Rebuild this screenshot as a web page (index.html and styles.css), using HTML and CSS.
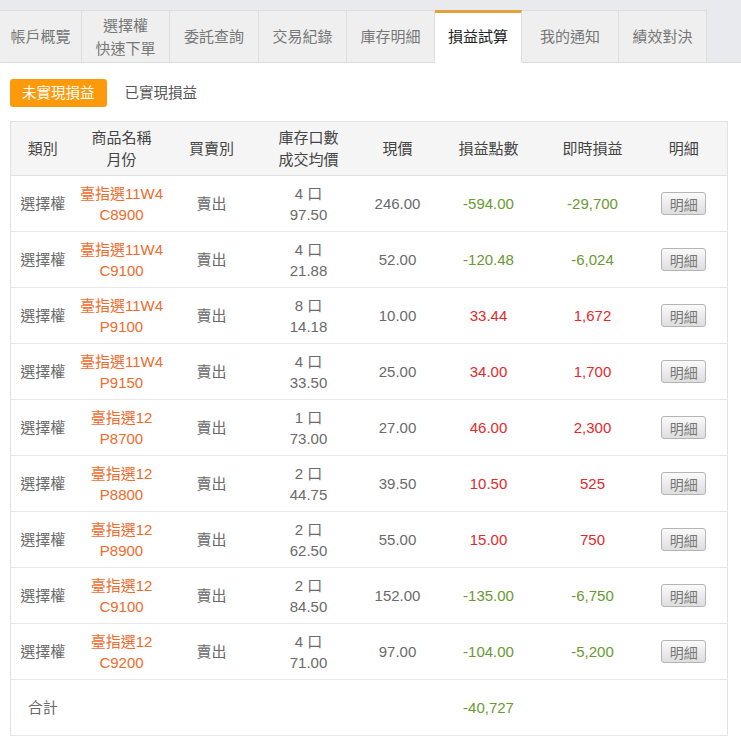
FILE: index.html
```html
<!DOCTYPE html>
<html>
    <head>
        <meta charset="utf-8">
        <title>損益試算</title>
        <link rel="stylesheet" href="styles.css">
    </head>
    <body>
        <div class="tabBar">
            <a class="tab tabFirst">帳戶概覽</a>
            <a class="tab">選擇權<br>快速下單</a>
            <a class="tab tabMid">委託查詢</a>
            <a class="tab">交易紀錄</a>
            <a class="tab">庫存明細</a>
            <a class="tab tabActive">損益試算</a>
            <a class="tab tabWide">我的通知</a>
            <a class="tab">績效對決</a>
        </div>
        <div class="content">
            <div class="switchRow">
                <a class="switchBtn switchOn">未實現損益</a>
                <a class="switchBtn">已實現損益</a>
            </div>
            <table class="plTable">
                <colgroup>
                    <col style="width:64px">
                    <col style="width:94px">
                    <col style="width:86px">
                    <col style="width:108px">
                    <col style="width:70px">
                    <col style="width:112px">
                    <col style="width:96px">
                    <col style="width:87px">
                </colgroup>
                <thead>
                    <tr>
                        <th>類別</th>
                        <th>商品名稱<br>月份</th>
                        <th>買賣別</th>
                        <th>庫存口數<br>成交均價</th>
                        <th>現價</th>
                        <th>損益點數</th>
                        <th>即時損益</th>
                        <th>明細</th>
                    </tr>
                </thead>
                <tbody id="rows"></tbody>
                <tfoot>
                    <tr>
                        <td>合計</td>
                        <td></td><td></td><td></td><td></td>
                        <td class="loss">-40,727</td>
                        <td></td><td></td>
                    </tr>
                </tfoot>
            </table>
        </div>
        <script>
            var positions = [
                ["11W4", "C8900", "4", "97.50", "246.00", "-594.00", "-29,700"],
                ["11W4", "C9100", "4", "21.88", "52.00", "-120.48", "-6,024"],
                ["11W4", "P9100", "8", "14.18", "10.00", "33.44", "1,672"],
                ["11W4", "P9150", "4", "33.50", "25.00", "34.00", "1,700"],
                ["12", "P8700", "1", "73.00", "27.00", "46.00", "2,300"],
                ["12", "P8800", "2", "44.75", "39.50", "10.50", "525"],
                ["12", "P8900", "2", "62.50", "55.00", "15.00", "750"],
                ["12", "C9100", "2", "84.50", "152.00", "-135.00", "-6,750"],
                ["12", "C9200", "4", "71.00", "97.00", "-104.00", "-5,200"]
            ];

            var rowsElement = document.getElementById("rows");

            for (var i = 0; i < positions.length; i++) {
                var p = positions[i];
                var cls = p[5].charAt(0) === "-" ? "loss" : "gain";
                var tr = document.createElement("tr");
                tr.innerHTML =
                    "<td>選擇權</td>" +
                    "<td class=\"product\">臺指選" + p[0] + "<br>" + p[1] + "</td>" +
                    "<td>賣出</td>" +
                    "<td>" + p[2] + " 口<br>" + p[3] + "</td>" +
                    "<td>" + p[4] + "</td>" +
                    "<td class=\"" + cls + "\">" + p[5] + "</td>" +
                    "<td class=\"" + cls + "\">" + p[6] + "</td>" +
                    "<td><button class=\"detailBtn\">明細</button></td>";
                rowsElement.appendChild(tr);
            }
        </script>
    </body>
</html>
```

FILE: styles.css
```css
body{
    margin: 0;
    padding: 0;
    font-family: "Liberation Sans", "Noto Sans CJK TC", sans-serif;
    font-size: 15px;
    color: #6a6a6a;
    background-color: #ffffff;
}

.tabBar{
    display: flex;
    padding-top: 10px;
    background-color: #e9eaed;
    border-bottom: 1px solid #dddddd;
    height: 52px;
}

.tab{
    display: flex;
    align-items: center;
    justify-content: center;
    text-align: center;
    width: 88px;
    box-sizing: border-box;
    background-color: #efefef;
    border-top: 1px solid #dedede;
    border-right: 1px solid #dedede;
    color: #777777;
    line-height: 23px;
    margin-bottom: -1px;
    border-bottom: 1px solid #dddddd;
}

.tabFirst{
    width: 82px;
}

.tabMid{
    width: 89px;
}

.tabWide{
    width: 97px;
}

.tabActive{
    background-color: #ffffff;
    border-top: 3px solid #e3a23c;
    border-bottom: 1px solid #ffffff;
    color: #222222;
    padding-bottom: 2px;
    width: 87px;
}

.content{
    padding: 16px 14px 0 10px;
}

.switchRow{
    display: flex;
    align-items: center;
    height: 28px;
}

.switchBtn{
    padding: 0 12px;
    height: 28px;
    line-height: 28px;
    border-radius: 3px;
    color: #555555;
    margin-right: 6px;
    font-size: 14.5px;
}

.switchOn{
    background-color: #fd9a0b;
    color: #ffffff;
}

.plTable{
    margin-top: 14px;
    width: 717px;
    table-layout: fixed;
    border-collapse: collapse;
    border: 1px solid #e2e2e2;
}

.plTable th{
    background-color: #f5f5f5;
    color: #444444;
    font-weight: normal;
    height: 53px;
    padding: 0;
    line-height: 22px;
    border-bottom: 1px solid #e2e2e2;
}

.plTable td{
    text-align: center;
    height: 55px;
    padding: 0;
    line-height: 21px;
    border-bottom: 1px solid #e6e6e6;
}

.product{
    color: #ef6b2e;
}

.loss{
    color: #6b9933;
}

.gain{
    color: #e5282b;
}

.detailBtn{
    font-family: "Liberation Sans", "Noto Sans CJK TC", sans-serif;
    font-size: 14px;
    color: #777777;
    width: 45px;
    height: 23px;
    padding: 0;
    border: 1px solid #b5b5b5;
    border-radius: 3px;
    background: linear-gradient(#fafafa, #dedede);
}
```
